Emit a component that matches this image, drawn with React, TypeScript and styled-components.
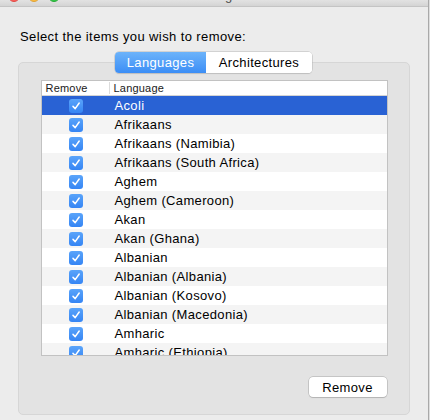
import React from "react";
import styled, { createGlobalStyle } from "styled-components";

const Global = createGlobalStyle`
  html, body { margin: 0; padding: 0; background: #dedede; }
  body { font-family: "Helvetica Neue", "Liberation Sans", Arial, sans-serif; -webkit-font-smoothing: antialiased; }
  * { box-sizing: border-box; }
`;

const Page = styled.div`
  width: 430px;
  height: 420px;
  overflow: hidden;
  display: flex;
`;

const Window = styled.div`
  width: 429px;
  height: 420px;
  background: #ececec;
  border-right: 1px solid #a9a9a9;
  display: flex;
  flex-direction: column;
`;

const TitleBar = styled.div`
  position: relative;
  height: 7px;
  flex: none;
  background: linear-gradient(#e2e2e2, #d4d4d4);
  border-bottom: 1px solid #c4c4c4;
  overflow: hidden;
`;

const Lights = styled.div`
  position: absolute;
  left: 8px;
  top: -10px;
  display: flex;
  gap: 8px;
`;

const Light = styled.span<{ $c: string; $b: string }>`
  width: 12px;
  height: 12px;
  border-radius: 50%;
  background: ${(p) => p.$c};
  border: 1px solid ${(p) => p.$b};
`;

const Title = styled.div`
  position: absolute;
  left: 0;
  right: 0;
  top: -12px;
  text-align: center;
  font-size: 13px;
  letter-spacing: 0.3px;
  color: #4d4d4d;
`;

const Content = styled.div`
  flex: 1;
  display: flex;
  flex-direction: column;
  padding: 22px 19px 4px 18px;
`;

const Heading = styled.div`
  font-size: 13px;
  letter-spacing: 0.4px;
  color: #000;
  padding-left: 2px;
  line-height: 16px;
  height: 16px;
`;

const TabView = styled.div`
  margin-top: 7px;
  display: flex;
  flex-direction: column;
  align-items: center;
`;

const Segmented = styled.div`
  position: relative;
  z-index: 1;
  display: flex;
  height: 21px;
  margin-bottom: -11px;
  border-radius: 4px;
  background: #fff;
  box-shadow: 0 0 0 0.5px #b8b8b8, 0 1px 1px rgba(0, 0, 0, 0.12);
  overflow: hidden;
`;

const Segment = styled.div<{ $active?: boolean; $w: number }>`
  width: ${(p) => p.$w}px;
  display: flex;
  align-items: center;
  justify-content: center;
  font-size: 13px;
  letter-spacing: 0.35px;
  color: ${(p) => (p.$active ? "#fff" : "#000")};
  background: ${(p) => (p.$active ? "linear-gradient(#6cb3fa, #3c8ef6)" : "#fff")};
`;

const Box = styled.div`
  width: 392px;
  height: 353px;
  background: #e3e3e3;
  border: 1px solid #d6d6d6;
  border-radius: 5px;
  padding: 17px 21px 0 22px;
  display: flex;
  flex-direction: column;
`;

const Table = styled.div`
  height: 276px;
  background: #fff;
  border: 1px solid #c2c2c2;
  display: flex;
  flex-direction: column;
  overflow: hidden;
`;

const Header = styled.div`
  height: 15px;
  flex: none;
  display: grid;
  grid-template-columns: 67px 1fr;
  border-bottom: 1px solid #d4d4d4;
  font-size: 11px;
  letter-spacing: 0.2px;
  color: #1a1a1a;
`;

const HeadCell = styled.div<{ $sep?: boolean }>`
  display: flex;
  align-items: center;
  padding-left: ${(p) => (p.$sep ? "4px" : "4px")};
  border-left: ${(p) => (p.$sep ? "1px solid #dcdcdc" : "none")};
  margin: 1px 0;
  line-height: 12px;
`;

const Row = styled.div<{ $odd: boolean; $sel: boolean }>`
  height: 19px;
  flex: none;
  display: grid;
  grid-template-columns: 67px 1fr;
  align-items: center;
  font-size: 13px;
  letter-spacing: 0.35px;
  color: ${(p) => (p.$sel ? "#fff" : "#000")};
  background: ${(p) => (p.$sel ? "#2962d4" : p.$odd ? "#f4f4f4" : "#fff")};
`;

const CheckCell = styled.div`
  display: flex;
  justify-content: center;
  padding-left: 1px;
`;

const Check = styled.span`
  width: 14px;
  height: 14px;
  border-radius: 3px;
  background: linear-gradient(#5aa4fa, #3585f4);
  display: flex;
  align-items: center;
  justify-content: center;
`;

const Name = styled.div`
  padding-left: 6px;
  white-space: nowrap;
`;

const Footer = styled.div`
  display: flex;
  justify-content: flex-end;
  padding-top: 21px;
`;

const Button = styled.button`
  width: 78px;
  height: 20px;
  background: #fff;
  border: none;
  border-radius: 4px;
  box-shadow: 0 0 0 0.5px #a8a8a8, 0 1px 1px rgba(0, 0, 0, 0.15);
  font-family: inherit;
  font-size: 13px;
  letter-spacing: 0.35px;
  color: #000;
  padding: 0;
  margin-right: 1px;
`;

const items = [
  "Acoli",
  "Afrikaans",
  "Afrikaans (Namibia)",
  "Afrikaans (South Africa)",
  "Aghem",
  "Aghem (Cameroon)",
  "Akan",
  "Akan (Ghana)",
  "Albanian",
  "Albanian (Albania)",
  "Albanian (Kosovo)",
  "Albanian (Macedonia)",
  "Amharic",
  "Amharic (Ethiopia)",
];

const Tick = () => (
  <svg width="10" height="10" viewBox="0 0 10 10">
    <path d="M2 5.4 L4.2 7.6 L8.2 2" fill="none" stroke="#fff" strokeWidth="1.5" strokeLinecap="round" strokeLinejoin="round" />
  </svg>
);

export default function App() {
  return (
    <Page>
      <Global />
      <Window>
        <TitleBar>
          <Lights>
            <Light $c="#fc605c" $b="#de4a45" />
            <Light $c="#fdbc40" $b="#dea236" />
            <Light $c="#34c84a" $b="#27aa35" />
          </Lights>
          <Title>Monolingual</Title>
        </TitleBar>
        <Content>
          <Heading>Select the items you wish to remove:</Heading>
          <TabView>
            <Segmented>
              <Segment $active $w={91}>Languages</Segment>
              <Segment $w={106}>Architectures</Segment>
            </Segmented>
            <Box>
              <Table>
                <Header>
                  <HeadCell>Remove</HeadCell>
                  <HeadCell $sep>Language</HeadCell>
                </Header>
                {items.map((name, i) => (
                  <Row key={name} $odd={i % 2 === 1} $sel={i === 0}>
                    <CheckCell>
                      <Check>
                        <Tick />
                      </Check>
                    </CheckCell>
                    <Name>{name}</Name>
                  </Row>
                ))}
              </Table>
              <Footer>
                <Button>Remove</Button>
              </Footer>
            </Box>
          </TabView>
        </Content>
      </Window>
    </Page>
  );
}
